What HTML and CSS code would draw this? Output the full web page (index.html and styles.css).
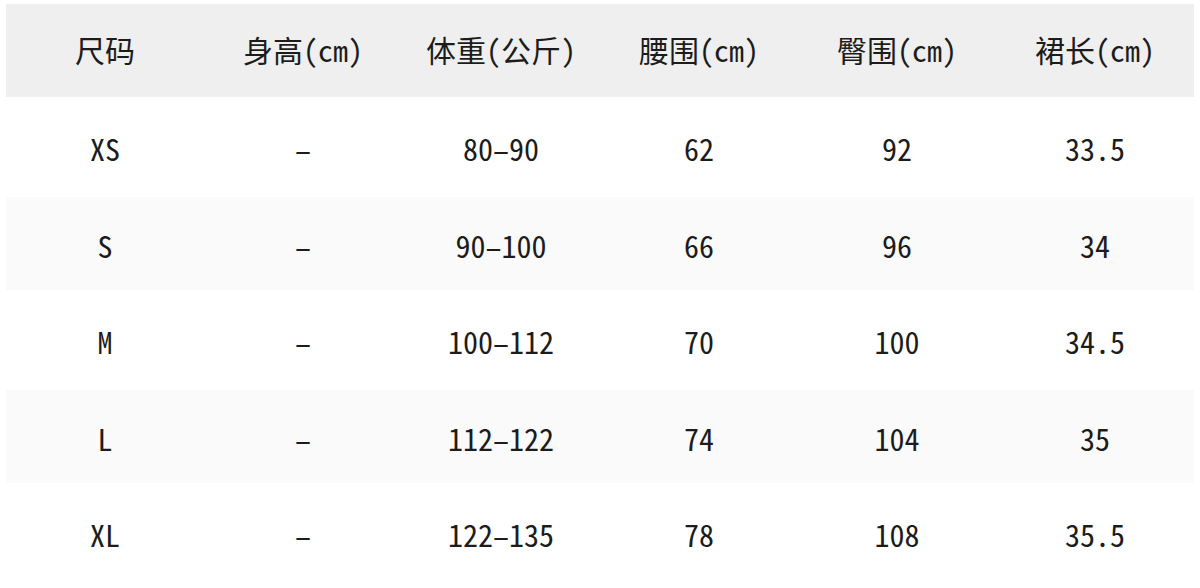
FILE: index.html
```html
<!DOCTYPE html>
<html lang="zh-CN">
<head>
<meta charset="utf-8">
<title>尺码表</title>
<link rel="stylesheet" href="styles.css">
</head>
<body>
<table class="size-table">
  <thead>
    <tr class="head-row">
      <th>尺码</th><th>身高(cm)</th><th>体重(公斤)</th><th>腰围(cm)</th><th>臀围(cm)</th><th>裙长(cm)</th>
    </tr>
  </thead>
  <tbody>
    <tr class="row tall"><td>XS</td><td>–</td><td>80–90</td><td>62</td><td>92</td><td>33.5</td></tr>
    <tr class="row short alt"><td>S</td><td>–</td><td>90–100</td><td>66</td><td>96</td><td>34</td></tr>
    <tr class="row tall"><td>M</td><td>–</td><td>100–112</td><td>70</td><td>100</td><td>34.5</td></tr>
    <tr class="row short alt"><td>L</td><td>–</td><td>112–122</td><td>74</td><td>104</td><td>35</td></tr>
    <tr class="row tall"><td>XL</td><td>–</td><td>122–135</td><td>78</td><td>108</td><td>35.5</td></tr>
  </tbody>
</table>
</body>
</html>
```
FILE: styles.css
```css
html, body {
  margin: 0;
  background: #ffffff;
}
body {
  padding: 4px 6px 0 6px;
  font-family: "Noto Sans Mono CJK SC", "Noto Sans CJK SC", "DejaVu Sans Mono", sans-serif;
  color: #1c1c1c;
}
.size-table {
  width: 1188px;
  border-collapse: collapse;
  table-layout: fixed;
}
.size-table th,
.size-table td {
  text-align: center;
  vertical-align: middle;
  padding: 0;
  font-weight: 400;
  font-size: 30px;
}
.head-row {
  background: #efefef;
  height: 93px;
}
.head-row th {
  padding-bottom: 3px;
}
.row td {
  padding-top: 2px;
}
.row.tall { height: 100px; }
.row.short { height: 93px; }
.row.alt { background: #fafafa; }
```
